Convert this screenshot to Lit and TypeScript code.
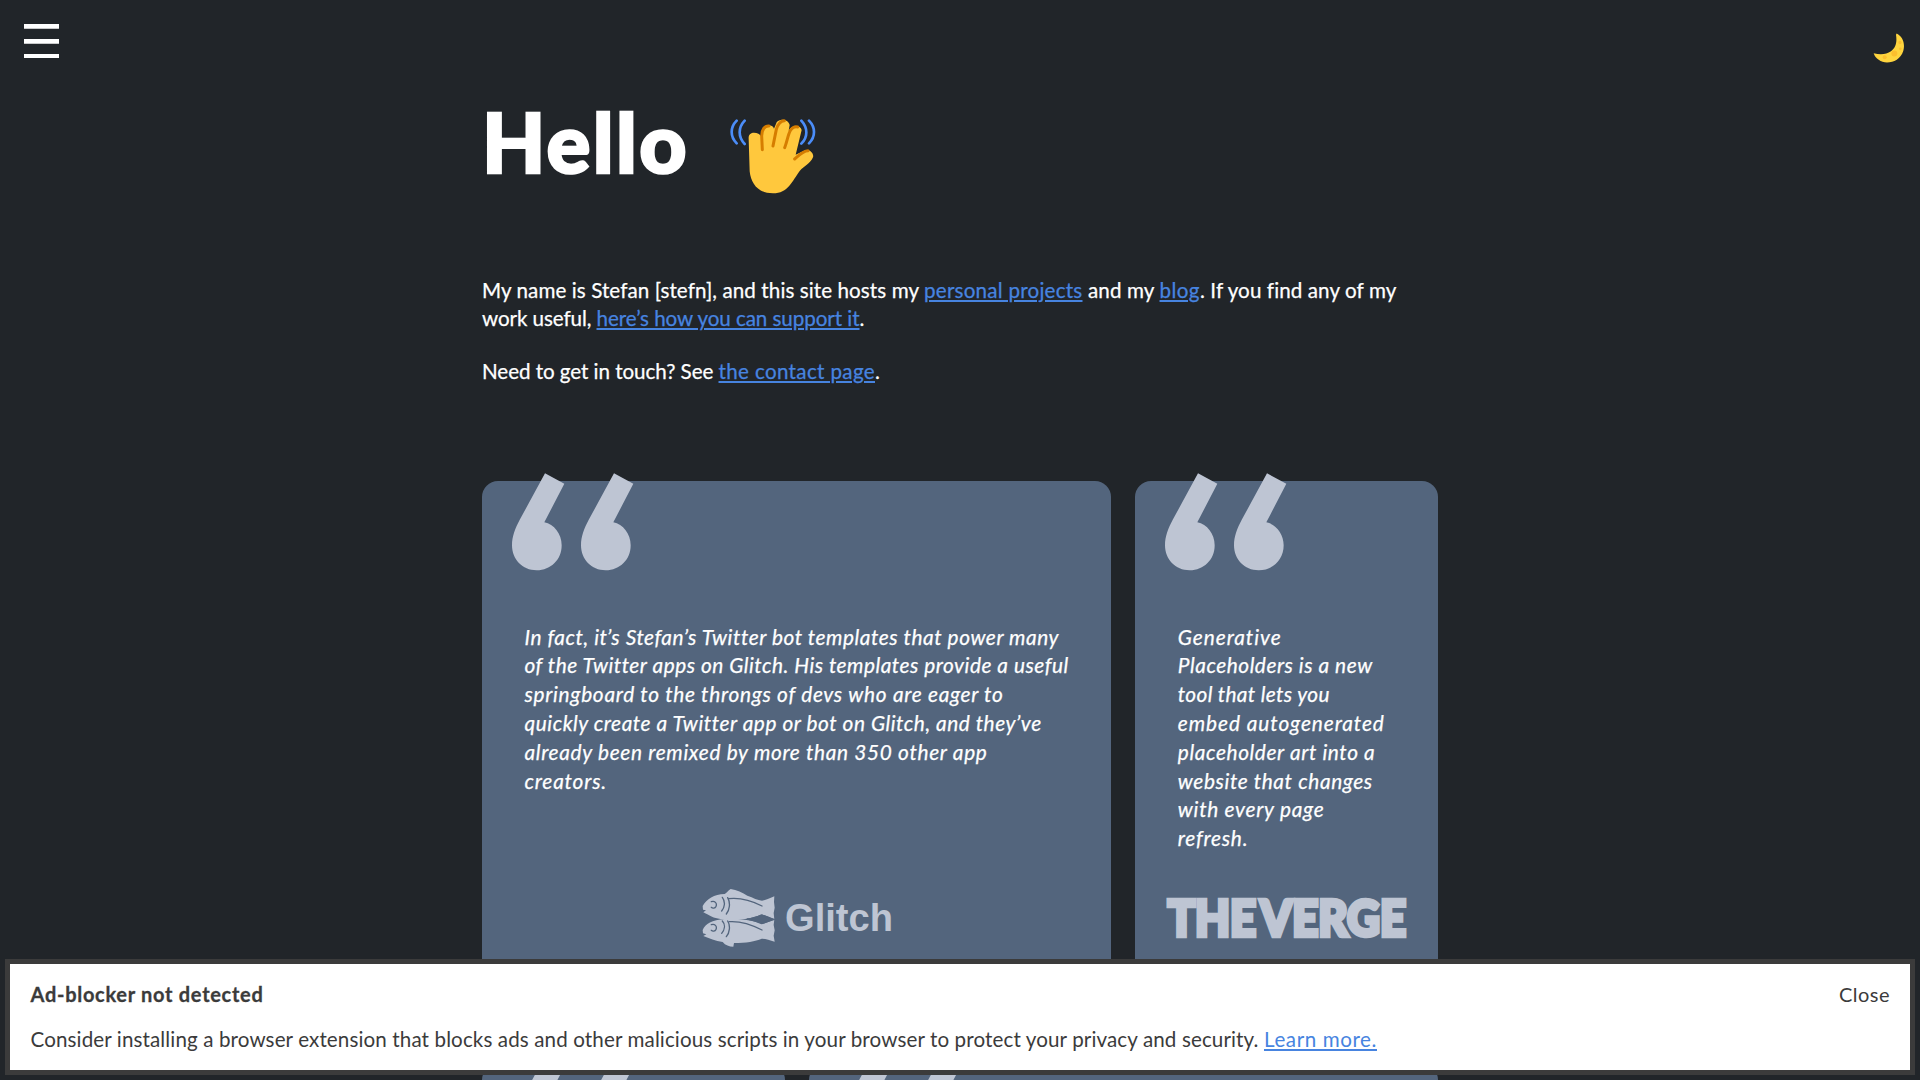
import { LitElement, html, css, svg } from "lit";
import { customElement, property } from "lit/decorators.js";

/** A run of text tracked so that it fills a given measure. */
@customElement("fit-text")
class FitText extends LitElement {
  static properties = { measure: { type: Number } };
  declare measure: number;

  static styles = css`
    :host { white-space: pre; }
  `;

  render() {
    return html`<slot></slot>`;
  }

  firstUpdated() {
    const chars = (this.textContent ?? "").length;
    const natural = this.getBoundingClientRect().width;
    if (chars > 0 && natural > 0) {
      this.style.letterSpacing = `${(this.measure - natural) / chars}px`;
    }
  }
}

type Line = [string, number];

@customElement("quote-card")
class QuoteCard extends LitElement {
  @property({ attribute: false }) lines: Line[] = [];

  static styles = css`
    :host {
      display: flex;
      flex-direction: column;
      position: relative;
      box-sizing: border-box;
      background: #53657d;
      border-radius: 16px;
      padding: 141.2px 30px 0 42.5px;
    }
    .mark {
      position: absolute;
      left: 30px;
      top: -8px;
      width: 122px;
      height: 98px;
      fill: #bec5d3;
    }
    blockquote {
      margin: 0;
      font-size: 20.8px;
      font-style: italic;
      color: #fff;
      -webkit-text-stroke: 0.25px #fff;
    }
    .line { display: block; height: 28.8px; white-space: nowrap; }
  `;

  render() {
    const drop =
      "M225 40L283 71L223 187C252 192 275 222 275 256C275 299 243 331 200 331C157 331 126 298 126 256C126 230 135 206 150 178Z";
    return html`
      <svg class="mark" viewBox="126 39 366 294" aria-hidden="true">
        <path d=${drop} />
        <path d=${drop} transform="translate(207 0)" />
      </svg>
      <blockquote>
        ${this.lines.map(
          ([text, w]) => html`<span class="line"><fit-text .measure=${w}>${text}</fit-text></span>`
        )}
      </blockquote>
      <slot></slot>
    `;
  }
}

const fish = svg`
  <path d="M38 108C50 88 72 72 104 72C110 69 114 62 122 57C140 60 158 68 172 77C190 83 203 91 216 92C228 90 238 85 253 79L252 96L254 113L251 129L253 148C238 142 226 134 214 133C198 141 184 145 165 147C130 150 85 150 66 140C56 136 47 130 40 127L48 121L39 119Z"/>
  <path d="M38 180C46 162 66 149 104 147C140 143 190 150 215 163C228 160 240 154 253 148L251 165L254 181L251 197L254 215C240 211 228 206 215 206C196 214 168 219 132 219L130 230C118 230 106 226 98 216C76 213 58 205 40 198L49 193L39 190Z"/>
`;
const fishLines = svg`
  <path d="M97 82C107 95 104 113 95 123M113 83C122 99 119 119 109 132M116 86C150 82 185 92 216 108M64 95C74 91 82 100 78 109C75 115 68 116 64 112M97 153C107 164 104 179 95 190M113 153C122 167 119 188 109 200M118 155C150 153 185 164 216 180M64 164C74 160 82 169 78 178C75 184 68 185 64 181M172 147C188 145 204 140 216 136C228 138 238 144 252 148C238 153 228 157 216 160C204 154 188 150 172 147"/>
`;

@customElement("app-root")
class AppRoot extends LitElement {
  static styles = css`
    :host {
      display: block;
      position: relative;
      width: 100%;
      height: 1080px;
      overflow: hidden;
      background: #212529;
      color: #fff;
      font: 20px/28.8px Lato, "Open Sans", sans-serif;
    }
    header {
      display: flex;
      justify-content: space-between;
      align-items: flex-start;
      height: 70px;
      padding: 24px 15px 0 24px;
      box-sizing: border-box;
    }
    .menu { width: 35px; height: 35px; fill: #fff; }
    .moon { width: 32px; height: 31px; margin-top: 9px; }
    main { width: 956px; margin: 0 auto; }
    .title {
      display: flex;
      align-items: flex-start;
      height: 205.6px;
    }
    h1 {
      margin: 20px 0 0;
      width: 244.5px;
      font-size: 82px;
      line-height: 102px;
      font-weight: 900;
      -webkit-text-stroke: 2.5px #fff;
    }
    .wave { width: 90px; height: 80px; margin-top: 47px; }
    p {
      margin: 0 0 24px;
      font-size: 20.6px;
      white-space: nowrap;
      -webkit-text-stroke: 0.25px currentColor;
    }
    a {
      color: #4784e0;
      text-decoration: underline;
      text-decoration-thickness: 2px;
      text-underline-offset: 2px;
      -webkit-text-stroke: 0.25px #4784e0;
    }
    .quotes {
      display: grid;
      grid-template-columns: repeat(3, minmax(0, 1fr));
      grid-auto-rows: 559px;
      gap: 24px;
      margin-top: 95.4px;
    }
    .wide { grid-column: span 2; }
    .logo { display: block; flex: none; overflow: visible; fill: #bec5d3; }
    .glitch { width: 220px; height: 88px; margin: 75px 0 0 165.5px; }
    .verge { width: 300px; height: 90px; margin: 17.4px 0 0 -37.5px; }
    .etch { fill: none; stroke: #53657d; stroke-width: 4; stroke-linecap: round; }
    .glitch-name { font: 700 115px "Liberation Sans", sans-serif; }
    .verge-name {
      font: 900 150px Lato, sans-serif;
      word-spacing: -16px;
      stroke: #bec5d3;
      stroke-width: 13;
    }
    .notice {
      position: absolute;
      left: 5px;
      right: 5px;
      bottom: 5px;
      height: 116px;
      box-sizing: border-box;
      border: 5px solid #3b3b3b;
      background: #fff;
      color: #3b3b3b;
      padding: 16px 20px 0 20.5px;
    }
    .notice-head { display: flex; justify-content: space-between; height: 45px; }
    .notice-head strong { font-weight: 700; -webkit-text-stroke: 0.3px #3b3b3b; }
    .notice p { margin: 0; -webkit-text-stroke: 0; }
    .notice a { -webkit-text-stroke: 0; }
  `;

  render() {
    return html`
      <header>
        <svg class="menu" viewBox="0 0 35 35" aria-label="Menu">
          <path d="M0 0h35v4.7H0zM0 15h35v4.7H0zM0 30h35v4H0z" />
        </svg>
        <svg class="moon" viewBox="69 70 96 92" aria-label="Dark mode">
          <path d="M140 71C158 80 166 101 160 123C152 148 132 158 111 158C93 157 76 146 71 130C91 135 109 134 123 124C139 112 141 94 138 75Z" fill="#ffd53e"/>
          <g fill="#fcbf2e"><circle cx="133" cy="131" r="9"/><circle cx="104" cy="142" r="6"/><circle cx="150" cy="98" r="5"/><circle cx="151" cy="117" r="4"/></g>
        </svg>
      </header>
      <main>
        <div class="title">
          <h1><fit-text .measure=${207}>Hello</fit-text></h1>
          <svg class="wave" viewBox="770 80 270 240" aria-label="Waving hand">
            <path d="M835 145C834 132 842 127 851 127C861 127 869 131 873 139L880 113C885 102 907 102 911 115L919 96C927 84 954 86 958 104L955 121C965 102 990 103 994 119L976 193L1001 181C1015 173 1032 188 1028 201C1020 220 1002 226 988 242C965 273 954 309 908 309C862 309 842 279 838 243Z" fill="#ffc83d"/>
            <g fill="none" stroke="#d67d00" stroke-width="9" stroke-linecap="round" stroke-linejoin="round">
              <path d="M876 178L874 137C874 118 883 106 896 107M908 167L918 117C924 98 931 91 942 91M943 172C952 148 953 130 962 118C968 110 975 108 982 110M973 206C985 196 998 181 1013 181"/>
            </g>
            <g fill="none" stroke="#4b8df8" stroke-width="8" stroke-linecap="round">
              <path d="M799 91C779 111 779 139 799 159M823 91C803 112 803 140 823 161M993 91C1013 113 1013 140 993 160M1016 91C1036 111 1036 139 1016 159"/>
            </g>
          </svg>
        </div>
        <p><fit-text .measure=${442}>My name is Stefan [stefn], and this site hosts my </fit-text><a><fit-text .measure=${158.5}>personal projects</fit-text></a><fit-text .measure=${77}> and my </fit-text><a><fit-text .measure=${40.5}>blog</fit-text></a><fit-text .measure=${196}>. If you find any of my</fit-text><br /><fit-text .measure=${114.5}>work useful, </fit-text><a><fit-text .measure=${263}>here’s how you can support it</fit-text></a>.</p>
        <p><fit-text .measure=${236.5}>Need to get in touch? See </fit-text><a><fit-text .measure=${156.5}>the contact page</fit-text></a>.</p>
        <section class="quotes">
          <quote-card class="wide" .lines=${[
            ["In fact, it’s Stefan’s Twitter bot templates that power many", 533.5],
            ["of the Twitter apps on Glitch. His templates provide a useful", 543],
            ["springboard to the throngs of devs who are eager to", 479],
            ["quickly create a Twitter app or bot on Glitch, and they’ve", 516],
            ["already been remixed by more than 350 other app", 463],
            ["creators.", 82.5],
          ]}>
            <svg class="logo glitch" viewBox="0 0 660 264" role="img" aria-label="Glitch">
              ${fish}
              <g class="etch">${fishLines}</g>
              <text class="glitch-name" x="285" y="182" textLength="324" lengthAdjust="spacingAndGlyphs">Glitch</text>
            </svg>
          </quote-card>
          <quote-card .lines=${[
            ["Generative", 103.5],
            ["Placeholders is a new", 195],
            ["tool that lets you", 152],
            ["embed autogenerated", 207],
            ["placeholder art into a", 197.5],
            ["website that changes", 195],
            ["with every page", 146.5],
            ["refresh.", 70.5],
          ]}>
            <svg class="logo verge" viewBox="0 0 900 270" role="img" aria-label="The Verge">
              <text class="verge-name" x="83" y="197" textLength="715" lengthAdjust="spacingAndGlyphs">THE VERGE</text>
            </svg>
          </quote-card>
          <quote-card></quote-card>
          <quote-card class="wide"></quote-card>
        </section>
      </main>
      <aside class="notice">
        <div class="notice-head">
          <strong><fit-text .measure=${233}>Ad-blocker not detected</fit-text></strong>
          <span><fit-text .measure=${51}>Close</fit-text></span>
        </div>
        <p><fit-text .measure=${1233.5}>Consider installing a browser extension that blocks ads and other malicious scripts in your browser to protect your privacy and security. </fit-text><a><fit-text .measure=${113}>Learn more.</fit-text></a></p>
      </aside>
    `;
  }
}
